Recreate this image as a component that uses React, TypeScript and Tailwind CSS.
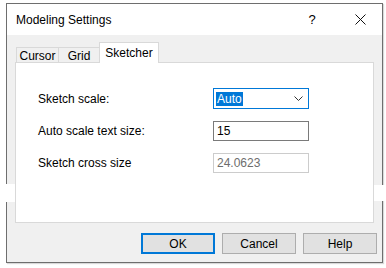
import React from 'react';

const font = { fontFamily: '"Liberation Sans", Arial, sans-serif' };

function Chevron() {
  return (
    <svg width="9" height="6" viewBox="0 0 9 6" className="block">
      <path d="M0.5 0.5 L4.5 4.5 L8.5 0.5" fill="none" stroke="#333" strokeWidth="1" />
    </svg>
  );
}

function CloseIcon() {
  return (
    <svg width="11" height="11" viewBox="0 0 11 11" className="block">
      <path d="M0.5 0.5 L10.5 10.5 M10.5 0.5 L0.5 10.5" fill="none" stroke="#111" strokeWidth="1" />
    </svg>
  );
}

export default function App() {
  return (
    <div className="relative w-[386px] h-[268px] bg-white pt-[3px] pl-[6px] text-[12px] text-black" style={font}>
      <div className="w-[377px] h-[260px] border border-[#6e6e6e] flex flex-col shadow-[1px_1px_1px_rgba(0,0,0,0.15)]">
        {/* title bar */}
        <div className="h-[31px] bg-white flex items-center pl-[9px] shrink-0">
          <span className="flex-1 leading-none">Modeling Settings</span>
          <span className="w-[10px] text-center leading-none mr-[38px] text-[13px]">?</span>
          <span className="mr-[16px]"><CloseIcon /></span>
        </div>

        {/* body */}
        <div className="flex-1 bg-[#f0f0f0] flex flex-col pt-[7px]">
          {/* tabs */}
          <div className="h-[20px] flex items-end pl-[9px] relative z-10">
            <div className="w-[42px] h-[15px] border-t border-l border-[#d9d9d9] bg-[#f0f0f0] flex items-center justify-center leading-none pt-[1px]">
              Cursor
            </div>
            <div className="w-[41px] h-[15px] border-t border-l border-[#d9d9d9] bg-[#f0f0f0] flex items-center justify-center leading-none pt-[1px]">
              Grid
            </div>
            <div className="w-[60px] h-[21px] -mb-px border-t border-l border-r border-[#d9d9d9] bg-white flex items-start justify-center leading-none pt-[4px]">
              Sketcher
            </div>
          </div>

          {/* panel */}
          <div className="mx-[8px] h-[161px] border border-[#d9d9d9] bg-white flex flex-col pl-[22px]">
            <div className="mt-[25px] h-[21px] flex items-center">
              <span className="w-[175px]">Sketch scale:</span>
              <div className="w-[96px] h-[21px] border border-[#0078d7] bg-white flex items-center pl-[2px] pr-[5px]">
                <span className="flex-1">
                  <span className="bg-[#0078d7] text-white px-[1px] leading-[14px] inline-block">Auto</span>
                </span>
                <Chevron />
              </div>
            </div>
            <div className="mt-[12px] h-[20px] flex items-center">
              <span className="w-[175px]">Auto scale text size:</span>
              <div className="w-[96px] h-[20px] border border-[#7a7a7a] bg-white flex items-center pl-[3px]">
                15
              </div>
            </div>
            <div className="mt-[12px] h-[20px] flex items-center">
              <span className="w-[175px]">Sketch cross size</span>
              <div className="w-[96px] h-[20px] border border-[#cccccc] bg-white flex items-center pl-[3px] text-[#6d6d6d]">
                24.0623
              </div>
            </div>
          </div>

          {/* buttons */}
          <div className="mt-[10px] flex justify-end gap-[7px] pr-[5px]">
            <button className="w-[74px] h-[21px] border-2 border-[#0078d7] bg-[#e1e1e1] flex items-center justify-center">
              OK
            </button>
            <button className="w-[74px] h-[21px] border border-[#adadad] bg-[#e1e1e1] flex items-center justify-center">
              Cancel
            </button>
            <button className="w-[74px] h-[21px] border border-[#adadad] bg-[#e1e1e1] flex items-center justify-center">
              Help
            </button>
          </div>
        </div>
      </div>

      {/* redraw glitch strips over the frame edges */}
      <div className="absolute left-0 top-[184px] w-[15px] h-[18px] bg-white" />
      <div className="absolute left-[374px] top-[185px] w-[12px] h-[16px] bg-white" />
    </div>
  );
}
